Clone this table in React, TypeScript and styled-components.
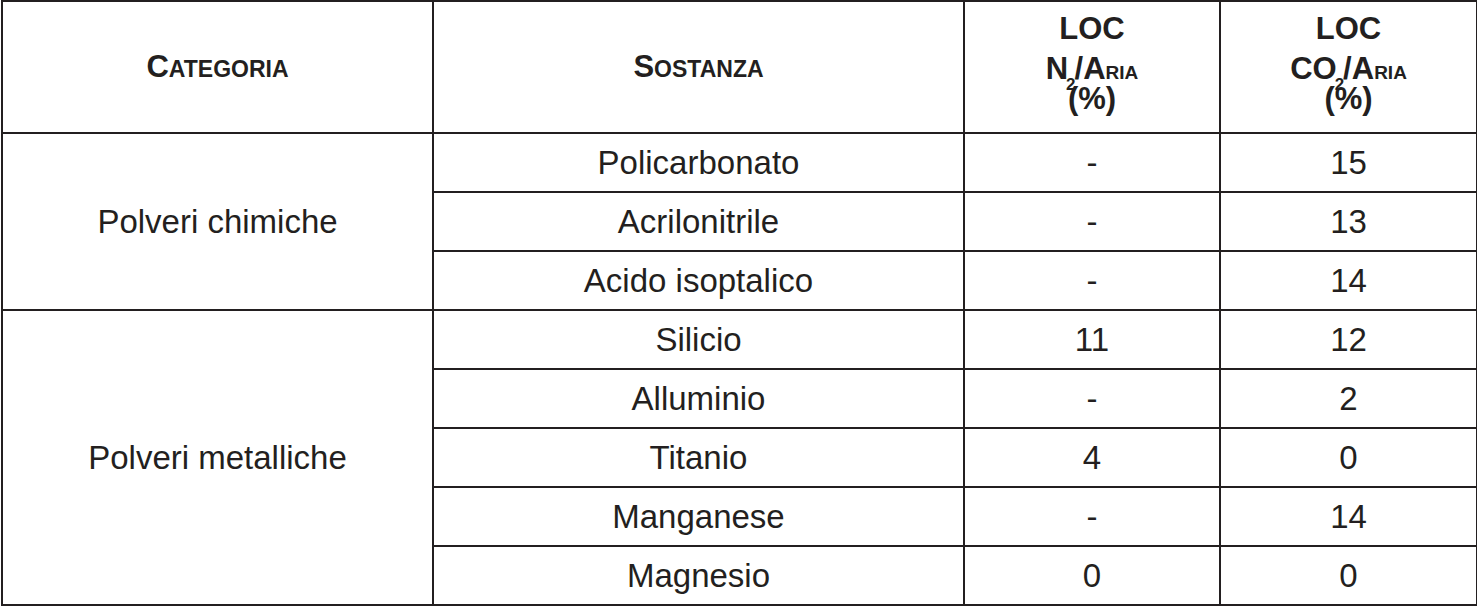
import React from "react";
import styled, { createGlobalStyle } from "styled-components";

const Global = createGlobalStyle`
  html, body { margin: 0; padding: 0; background: #ffffff; }
  body { font-family: "Liberation Sans", Arial, Helvetica, sans-serif; color: #231f20; }
`;

const Page = styled.div`
  padding: 0 0 0 1px;
`;

const Table = styled.table`
  border-collapse: collapse;
  width: 1475px;
  table-layout: fixed;
  border: 2px solid #231f20;
`;

const Col = styled.col<{ $w: number }>`
  width: ${(p) => p.$w}px;
`;

const HeadCell = styled.th`
  border: 2px solid #231f20;
  height: 130px;
  padding: 0;
  font-weight: 700;
  text-align: center;
  vertical-align: middle;
  font-size: 31px;
`;

const StackCell = styled(HeadCell)`
  vertical-align: top;
  height: 123px;
  padding-top: 7px;
`;

const Line = styled.div<{ $h: number }>`
  line-height: ${(p) => p.$h}px;
  height: ${(p) => p.$h}px;
  white-space: nowrap;
`;

const Small = styled.span<{ $size: number }>`
  font-size: ${(p) => p.$size}px;
`;

const Sub = styled.span`
  font-size: 17px;
  position: relative;
  top: 11px;
  margin: 0 -1px 0 -2px;
`;

const Cell = styled.td`
  border: 2px solid #231f20;
  height: 57px;
  padding: 0;
  text-align: center;
  vertical-align: middle;
  font-size: 33px;
  white-space: nowrap;
`;

const GroupCell = styled(Cell)`
  padding-bottom: 0;
`;

type Row = { s: string; n: string; c: string };

const groups: { name: string; rows: Row[] }[] = [
  {
    name: "Polveri chimiche",
    rows: [
      { s: "Policarbonato", n: "-", c: "15" },
      { s: "Acrilonitrile", n: "-", c: "13" },
      { s: "Acido isoptalico", n: "-", c: "14" },
    ],
  },
  {
    name: "Polveri metalliche",
    rows: [
      { s: "Silicio", n: "11", c: "12" },
      { s: "Alluminio", n: "-", c: "2" },
      { s: "Titanio", n: "4", c: "0" },
      { s: "Manganese", n: "-", c: "14" },
      { s: "Magnesio", n: "0", c: "0" },
    ],
  },
];

const SmallCaps = ({ first, rest, size }: { first: string; rest: string; size: number }) => (
  <>
    {first}
    <Small $size={size}>{rest}</Small>
  </>
);

export default function App() {
  return (
    <Page>
      <Global />
      <Table>
        <colgroup>
          <Col $w={431} />
          <Col $w={531} />
          <Col $w={256} />
          <Col $w={257} />
        </colgroup>
        <thead>
          <tr>
            <HeadCell>
              <SmallCaps first="C" rest="ATEGORIA" size={23} />
            </HeadCell>
            <HeadCell>
              <SmallCaps first="S" rest="OSTANZA" size={23} />
            </HeadCell>
            <StackCell>
              <Line $h={40}>LOC</Line>
              <Line $h={40}>
                N<Sub>2</Sub>/<SmallCaps first="A" rest="RIA" size={19} />
              </Line>
              <Line $h={20}>(%)</Line>
            </StackCell>
            <StackCell>
              <Line $h={40}>LOC</Line>
              <Line $h={40}>
                CO<Sub>2</Sub>/<SmallCaps first="A" rest="RIA" size={19} />
              </Line>
              <Line $h={20}>(%)</Line>
            </StackCell>
          </tr>
        </thead>
        <tbody>
          {groups.map((g) =>
            g.rows.map((r, i) => (
              <tr key={g.name + r.s}>
                {i === 0 && <GroupCell rowSpan={g.rows.length}>{g.name}</GroupCell>}
                <Cell>{r.s}</Cell>
                <Cell>{r.n}</Cell>
                <Cell>{r.c}</Cell>
              </tr>
            ))
          )}
        </tbody>
      </Table>
    </Page>
  );
}
